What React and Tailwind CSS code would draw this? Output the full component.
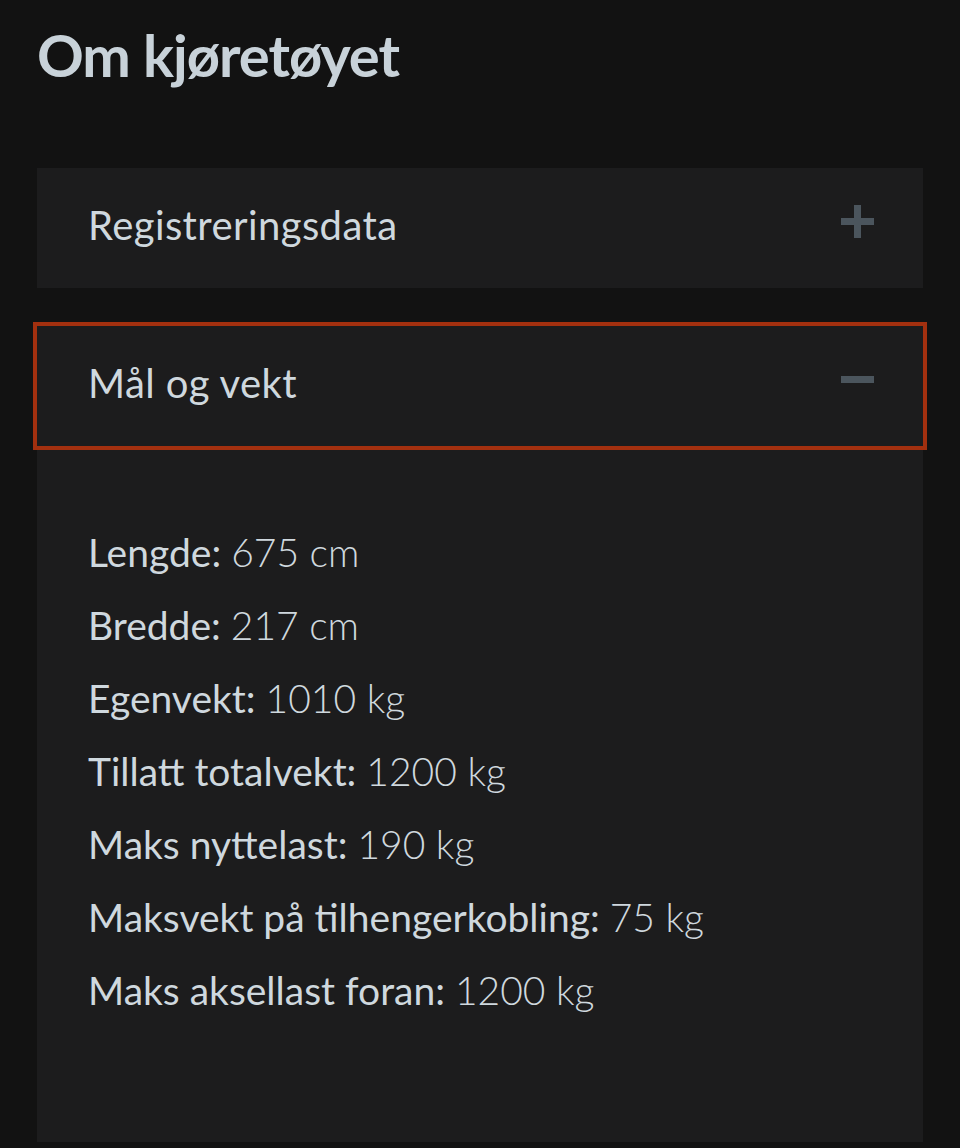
import React, { useState } from 'react';

const specs = [
    ['Lengde:', '675 cm'],
    ['Bredde:', '217 cm'],
    ['Egenvekt:', '1010 kg'],
    ['Tillatt totalvekt:', '1200 kg'],
    ['Maks nyttelast:', '190 kg'],
    ['Maksvekt på tilhengerkobling:', '75 kg'],
    ['Maks aksellast foran:', '1200 kg'],
];

function ToggleIcon({ open }) {
    return (
        <div className="relative w-[33px] h-[33px] shrink-0 mb-[7px]">
            <div className="absolute left-0 right-0 top-[13px] h-[7px] bg-[#4b555d]" />
            {!open && <div className="absolute top-0 bottom-0 left-[13px] w-[7px] bg-[#4b555d]" />}
        </div>
    );
}

function Section({ title, open, onToggle, children }) {
    return (
        <div>
            <button
                onClick={onToggle}
                className={`w-full h-[120px] flex items-center justify-between pl-[51px] pr-[49px] pb-[7px] bg-[#1c1c1d] text-left ${open ? 'outline-4 outline-[#a3300f]' : ''}`}
            >
                <span className="text-[40px] leading-[1.2] tracking-[0.4px] text-[#cfd8de]">{title}</span>
                <ToggleIcon open={open} />
            </button>
            {open && children}
        </div>
    );
}

export default function App() {
    const [openSection, setOpenSection] = useState('maal');

    return (
        <div className="min-h-[1148px] bg-[#121212] px-[37px] pt-[26px] font-['Lato',sans-serif]">
            <h1 className="text-[58px] leading-none font-bold tracking-[-1px] text-[#c8d2d9] mb-[84px]">Om kjøretøyet</h1>
            <div className="flex flex-col gap-[38px]">
                <Section
                    title="Registreringsdata"
                    open={openSection === 'reg'}
                    onToggle={() => setOpenSection(openSection === 'reg' ? '' : 'reg')}
                />
                <Section
                    title="Mål og vekt"
                    open={openSection === 'maal'}
                    onToggle={() => setOpenSection(openSection === 'maal' ? '' : 'maal')}
                >
                    <div className="bg-[#1c1c1d] pl-[51px] pt-[70px] pb-[115px]">
                        {specs.map(([label, value]) => (
                            <p key={label} className="text-[39px] leading-[73px] text-[#cfd8de]">
                                <span className="font-normal">{label}</span>{' '}
                                <span className="font-light">{value}</span>
                            </p>
                        ))}
                    </div>
                </Section>
            </div>
        </div>
    );
}
